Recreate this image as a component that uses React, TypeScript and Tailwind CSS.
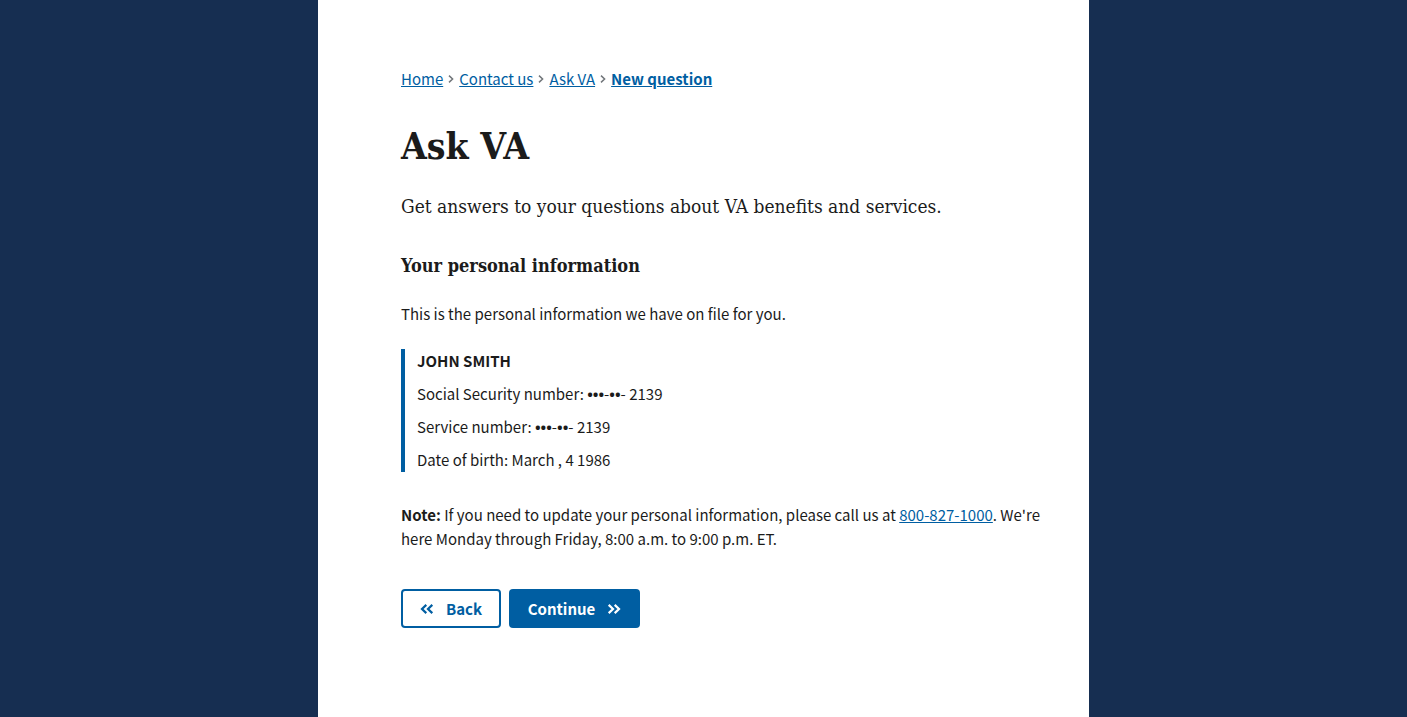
import React from "react";

const crumbs = ["Home", "Contact us", "Ask VA"];

function Chevron() {
  return (
    <svg width="6" height="8" viewBox="0 0 6 8" fill="none" aria-hidden="true" className="shrink-0">
      <path d="M1 .6 4.6 4 1 7.4" stroke="#71767a" strokeWidth="1.5" />
    </svg>
  );
}

function DoubleChevron({ left = false }: { left?: boolean }) {
  return (
    <svg width="14" height="10" viewBox="0 0 14 10" fill="none" aria-hidden="true" className="shrink-0">
      <path
        d={left ? "M6.3 .9 2 5l4.3 4.1M12.3 .9 8 5l4.3 4.1" : "M1.7 .9 6 5 1.7 9.1M7.7 .9 12 5 7.7 9.1"}
        stroke="currentColor"
        strokeWidth="2.2"
      />
    </svg>
  );
}

function Dots({ children }: { children: string }) {
  return <span className="font-['Noto_Sans',sans-serif] font-bold">{children}</span>;
}

function Masked() {
  return (
    <>
      <Dots>•••</Dots>-<Dots>••</Dots>-
    </>
  );
}

const linkClass = "text-[#005ea2] underline underline-offset-1";

export default function App() {
  return (
    <div className="min-h-screen bg-[#162e51] font-['Noto_Sans_CJK_SC',sans-serif] text-[15px] leading-6 text-[#1b1b1b] flex justify-center">
      <main className="w-full max-w-[771px] bg-white pl-[83px] pr-8 pt-[67px] pb-20">
        <nav aria-label="Breadcrumb">
          <ol className="flex items-center gap-[5px]">
            {crumbs.map((c) => (
              <li key={c} className="flex items-center gap-[5px]">
                <a href="#" className={linkClass}>{c}</a>
                <Chevron />
              </li>
            ))}
            <li>
              <a href="#" aria-current="page" className="font-bold text-[#005ea2] underline underline-offset-1">New question</a>
            </li>
          </ol>
        </nav>
        <h1 className="mt-8 font-['DejaVu_Serif_Condensed','DejaVu_Serif',serif] text-[37px] leading-[46px] font-bold">Ask VA</h1>
        <p className="mt-[21px] font-['DejaVu_Serif_Condensed','DejaVu_Serif',serif] text-[19px] leading-8">Get answers to your questions about VA benefits and services.</p>
        <h2 className="mt-8 font-['DejaVu_Serif_Condensed','DejaVu_Serif',serif] text-lg leading-6 font-bold">Your personal information</h2>
        <p className="mt-6">This is the personal information we have on file for you.</p>
        <div className="mt-[23px] flex flex-col gap-[9px] border-l-4 border-[#005ea2] pl-3">
          <p className="font-bold">JOHN SMITH</p>
          <p>Social Security number: <Masked /> 2139</p>
          <p>Service number: <Masked /> 2139</p>
          <p>Date of birth: March , 4 1986</p>
        </div>
        <p className="mt-[31px]">
          <strong>Note:</strong> If you need to update your personal information, please call us at{" "}
          <a href="tel:8008271000" className={linkClass}>800-827-1000</a>. We're here Monday through Friday, 8:00 a.m. to 9:00 p.m. ET.
        </p>
        <div className="mt-[38px] flex gap-2">
          <button type="button" className="flex h-[39px] w-[100px] items-center justify-center gap-3 rounded-[4px] border-2 border-[#005ea2] font-bold text-[#005ea2]">
            <DoubleChevron left />
            Back
          </button>
          <button type="button" className="flex h-[39px] w-[131px] items-center justify-center gap-3 rounded-[4px] bg-[#005ea2] font-bold text-white">
            Continue
            <DoubleChevron />
          </button>
        </div>
      </main>
    </div>
  );
}
